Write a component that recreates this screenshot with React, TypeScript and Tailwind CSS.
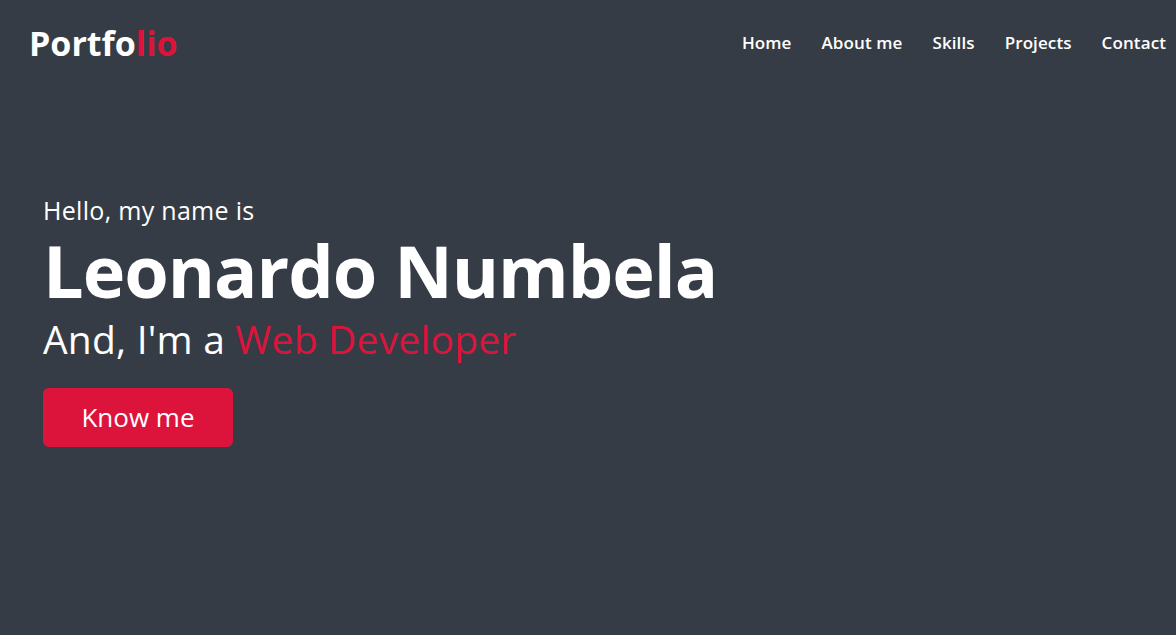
export default function App() {
  const font = { fontFamily: '"Open Sans", "Noto Sans", sans-serif' };
  return (
    <div className="w-full h-[635px] bg-[#363c45] text-white overflow-hidden" style={font}>
      <nav className="flex items-center justify-between h-[86px] pl-[29px] pr-[10px]">
        <div className="text-[34px] font-bold leading-none">
          Portfo<span className="text-[#dc143c]">lio</span>
        </div>
        <ul className="flex gap-[30px] text-[17px] font-semibold tracking-[0.1px]">
          <li>Home</li>
          <li>About me</li>
          <li>Skills</li>
          <li>Projects</li>
          <li>Contact</li>
        </ul>
      </nav>
      <section className="pl-[43px] pt-[108px]">
        <div className="text-[25px] leading-[32px] tracking-[0.3px]">Hello, my name is</div>
        <h1 className="text-[72px] font-bold leading-[88px] tracking-[-1px]">Leonardo Numbela</h1>
        <div className="text-[39px] leading-[50px] tracking-[0.2px]">
          And, I'm a <span className="text-[#dc143c] font-medium">Web Developer</span>
        </div>
        <button className="mt-[24px] w-[190px] h-[59px] rounded-[6px] bg-[#dc143c] text-[26px] text-white">
          Know me
        </button>
      </section>
    </div>
  );
}
